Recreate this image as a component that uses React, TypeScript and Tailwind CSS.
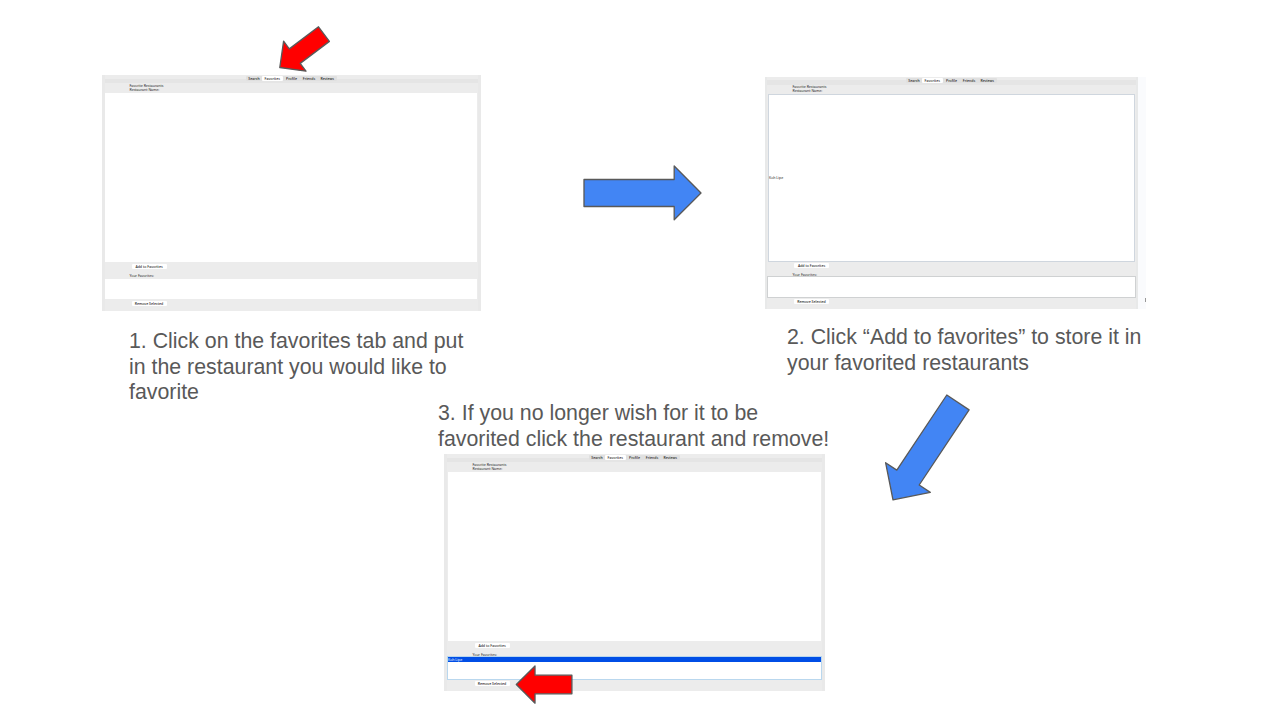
import React from "react";

type ScreenProps = {
  frame: string;
  top: string;
  header: string;
  list: string;
  middle: string;
  favorites: string;
  footer: string;
  label: string;
  button: string;
  yourLabel: string;
  result?: string;
  selected?: string;
};

const tabList = [
  { name: "Search", width: "w-[16px]" },
  { name: "Favorites", width: "w-[20.5px] bg-white rounded-[1px]" },
  { name: "Profile", width: "w-[18px]" },
  { name: "Friends", width: "w-[17px]" },
  { name: "Reviews", width: "w-[19.5px]" },
];

function Screen(p: ScreenProps) {
  return (
    <div
      className={`flex flex-col bg-[#ececec] font-['Noto_Sans','Open_Sans',sans-serif] text-[3.5px] leading-[4.4px] whitespace-nowrap text-[#1c1c1c] ${p.frame}`}
    >
      <div className={`flex shrink-0 justify-center ${p.top}`}>
        <div className="flex h-[5px] rounded-[1px] bg-[#e0e0e0] font-medium leading-[5px]">
          {tabList.map((t) => (
            <span key={t.name} className={`text-center ${t.width}`}>
              {t.name}
            </span>
          ))}
        </div>
      </div>
      <div className={`shrink-0 ${p.header} ${p.label}`}>
        <p>Favorite Restaurants</p>
        <p>Restaurant Name:</p>
      </div>
      <div className={`flex shrink-0 items-center bg-white ${p.list}`}>{p.result}</div>
      <div className={`shrink-0 ${p.middle}`}>
        <div className={p.button}>
          <button className="block h-[5px] w-[35px] rounded-[1px] bg-white text-center font-medium leading-[5px]">
            Add to Favorites
          </button>
        </div>
        <p className={`${p.label} ${p.yourLabel}`}>Your Favorites:</p>
      </div>
      <div className={`shrink-0 overflow-hidden bg-white ${p.favorites}`}>
        {p.selected && <p className="h-[5px] bg-[#004ee6] leading-[5px] text-white">{p.selected}</p>}
      </div>
      <div className={`${p.footer} ${p.button}`}>
        <button className="block h-[5px] w-[35px] rounded-[1px] bg-white text-center font-medium leading-[5px]">
          Remove Selected
        </button>
      </div>
    </div>
  );
}

const caption =
  "absolute whitespace-nowrap font-['Liberation_Sans',Arial,sans-serif] text-[21.33px] leading-[25.7px] text-[#595959]";

export default function App() {
  return (
    <main className="relative h-[714px] w-[1267px] overflow-hidden bg-white">
      <section className="absolute left-[102px] top-[75px]">
        <Screen
          frame="h-[236px] w-[379px] border-x-[3px] border-[#e9e9e9]"
          top="h-[8px] pt-[1px] bg-[linear-gradient(#ececec_50%,#e5e5e5_50%)]"
          header="h-[10px] pt-[0.6px]"
          list="mr-[1px] h-[169px]"
          middle="h-[17px] pt-[2px]"
          favorites="mr-[1px] h-[20px]"
          footer="pt-[2px]"
          label="pl-[24.5px]"
          button="pl-[26.5px]"
          yourLabel="pt-[4.6px]"
        />
      </section>
      <p className={`${caption} left-[129px] top-[329px]`}>
        1. Click on the favorites tab and put
        <br />
        in the restaurant you would like to
        <br />
        favorite
      </p>

      <section className="absolute left-[765px] top-[77px] flex">
        <Screen
          frame="h-[232px] w-[373px] border-x-2 border-[#e8e9e9]"
          top="h-[8px] pt-[0.6px] bg-[linear-gradient(#ececec_40%,#e5e5e5_40%)]"
          header="h-[9px]"
          list="mx-[1px] h-[168px] border border-[#cfd6de]"
          middle="h-[14px] pt-[1px]"
          favorites="h-[22px] border border-[#cfd1d2]"
          footer="pt-[1px]"
          label="pl-[25.5px]"
          button="pl-[27px]"
          yourLabel="pt-[5px]"
          result="Koh Lipe"
        />
        <div className="flex h-[232px] w-[8px] items-end justify-end bg-[#fafbfd] pb-[7px]">
          <span className="h-[4px] w-px bg-[#999999]" />
        </div>
      </section>
      <p className={`${caption} left-[787px] top-[325px]`}>
        2. Click “Add to favorites” to store it in
        <br />
        your favorited restaurants
      </p>

      <p className={`${caption} left-[438px] top-[401px]`}>
        3. If you no longer wish for it to be
        <br />
        favorited click the restaurant and remove!
      </p>
      <section className="absolute left-[444px] top-[454px]">
        <Screen
          frame="h-[237px] w-[381px] border-x-[3px] border-[#e9e9e9]"
          top="h-[8px] pt-[1px] bg-[linear-gradient(#ececec_50%,#e5e5e5_50%)]"
          header="h-[10px] pt-[0.6px]"
          list="mx-[1px] h-[169px]"
          middle="h-[15px] pt-[2px]"
          favorites="h-[24px] border border-[#b9d7ee]!"
          footer="pt-[1px]"
          label="pl-[25.5px]"
          button="pl-[27.5px]"
          yourLabel="pt-[4.8px]"
          selected="Koh Lipe"
        />
      </section>

      <svg className="absolute inset-0" width="1267" height="714" viewBox="0 0 1267 714" stroke="#595959" strokeWidth="1.33" strokeLinejoin="round">
        <path fill="#ff0000" d="M318.5 26.8 329.4 41.4 300.2 63.4 306 71.2 279.8 67.5 283.6 41.2 289.3 48.9Z" />
        <path fill="#4285f4" d="M584 179.5H674.2V166L701 193 674.2 219.8V206.5H584Z" />
        <path fill="#4285f4" d="M946.8 395 969.1 409.9 919.2 485 930.3 492.4 893 499.8 885.6 462.7 896.8 470.1Z" />
        <path fill="#ff0000" d="M516.3 684.5 535 666V675.2H571.9V693.8H535V703.2Z" />
      </svg>
    </main>
  );
}
